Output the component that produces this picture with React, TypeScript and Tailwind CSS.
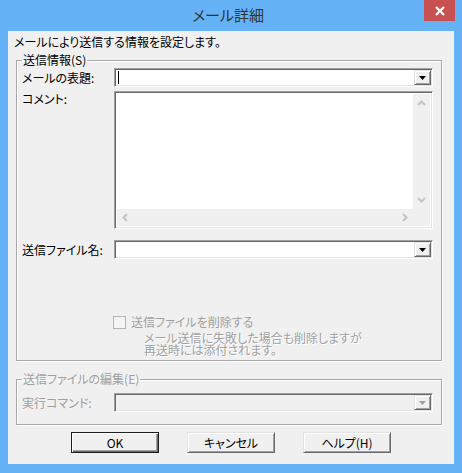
import React from "react";

const sunken =
  "border border-t-[#a0a0a0] border-l-[#a0a0a0] border-r-white border-b-white shadow-[inset_1px_1px_0_#696969,inset_-1px_-1px_0_#e3e3e3]";
const raised =
  "border border-t-[#e3e3e3] border-l-[#e3e3e3] border-r-[#696969] border-b-[#696969] shadow-[inset_1px_1px_0_#ffffff,inset_-1px_-1px_0_#a0a0a0] bg-[#f0f0f0]";

function DropButton({ disabled }: { disabled?: boolean }) {
  return (
    <div className={`flex h-full w-[17px] items-center justify-center ${raised}`}>
      <svg width="7" height="4" viewBox="0 0 7 4">
        <polygon points="0,0 7,0 3.5,4" fill={disabled ? "#a0a0a0" : "#000000"} />
      </svg>
    </div>
  );
}

function Combo({ disabled, caret }: { disabled?: boolean; caret?: boolean }) {
  return (
    <div
      className={`flex h-[19px] w-[319px] p-px ${sunken} ${disabled ? "bg-[#f0f0f0]" : "bg-white"}`}
    >
      <div className="flex flex-1 items-center pl-[2px]">
        {caret && <div className="h-[13px] w-px bg-black" />}
      </div>
      <DropButton disabled={disabled} />
    </div>
  );
}

function Chevron({ dir }: { dir: "up" | "down" | "left" | "right" }) {
  const pts = {
    up: "1,5 4.5,1.5 8,5",
    down: "1,1 4.5,4.5 8,1",
    left: "5,1 1.5,4.5 5,8",
    right: "1,1 4.5,4.5 1,8",
  }[dir];
  const vertical = dir === "up" || dir === "down";
  return (
    <svg
      width={vertical ? 9 : 6}
      height={vertical ? 6 : 9}
      viewBox={vertical ? "0 0 9 6" : "0 0 6 9"}
    >
      <polyline points={pts} fill="none" stroke="#c4c4c4" strokeWidth="2" />
    </svg>
  );
}

function Memo() {
  return (
    <div
      className={`grid h-[138px] w-[319px] grid-cols-[1fr_17px] grid-rows-[1fr_17px] bg-white p-[2px] ${sunken}`}
    >
      <div className="bg-white" />
      <div className="flex flex-col items-center justify-between bg-[#f0f0f0] py-[6px]">
        <Chevron dir="up" />
        <Chevron dir="down" />
      </div>
      <div className="flex items-center justify-between bg-[#f0f0f0] px-[5px]">
        <Chevron dir="left" />
        <Chevron dir="right" />
      </div>
      <div className="bg-[#f0f0f0]" />
    </div>
  );
}

function Button({ label, primary }: { label: string; primary?: boolean }) {
  return (
    <div
      className={`flex h-[21px] w-[88px] items-center justify-center bg-[#f0f0f0] text-[12px] leading-[14px] text-black ${
        primary
          ? "border border-[#1e1e1e] shadow-[inset_1px_1px_0_#ffffff,inset_-1px_-1px_0_#696969,inset_-2px_-2px_0_#a0a0a0]"
          : raised
      }`}
    >
      {label}
    </div>
  );
}

export default function App() {
  return (
    <div className="flex h-[473px] w-[462px] flex-col bg-[#66b2f7] font-['Noto_Sans_CJK_JP',sans-serif] [font-feature-settings:'palt'] text-black">
      {/* Title bar */}
      <div className="flex h-[31px] shrink-0">
        <div className="flex flex-1 items-center justify-center pb-[1px] pl-[32px] text-[15px] leading-[20px] text-[#333333]">
          メール詳細
        </div>
        <div className="mr-[7px] flex h-[21px] w-[31px] items-center justify-center bg-[#c75050]">
          <svg width="10" height="10" viewBox="0 0 10 10">
            <path d="M1 1 L9 9 M9 1 L1 9" stroke="#ffffff" strokeWidth="2.2" />
          </svg>
        </div>
      </div>

      {/* Client */}
      <div className="ml-[8px] flex h-[433px] w-[446px] flex-col bg-[#f0f0f0] text-[12px] leading-[14px]">
        <div className="pl-[6px] pt-[4px]">メールにより送信する情報を設定します。</div>

        {/* 送信情報 */}
        <fieldset className="ml-[8px] mt-[4px] w-[426px] border border-[#a8a8a8] pb-[4px] pl-[5px] shadow-[1px_1px_0_#ffffff,inset_1px_1px_0_#ffffff]">
          <legend className="px-[1px]">送信情報(S)</legend>
          <div className="mt-[1px] flex items-center">
            <span className="w-[92px]">メールの表題:</span>
            <Combo caret />
          </div>
          <div className="mt-[4px] flex items-start">
            <span className="w-[92px] pt-[1px]">コメント:</span>
            <Memo />
          </div>
          <div className="mt-[11px] flex items-center">
            <span className="w-[92px]">送信ファイル名:</span>
            <Combo />
          </div>
          <div className="ml-[91px] mt-[56px] flex h-[14px] items-center gap-[5px] text-[#a0a0a0]">
            <div className="h-[13px] w-[13px] border border-[#b4b4b4] bg-[#f4f4f4]" />
            <span>送信ファイルを削除する</span>
          </div>
          <p className="ml-[122px] mt-[3px] whitespace-pre-line text-[12px] leading-[12px] text-[#a0a0a0] [text-shadow:1px_1px_0_#ffffff]">
            {"メール送信に失敗した場合も削除しますが\n再送時には添付されます。"}
          </p>
        </fieldset>

        {/* 送信ファイルの編集 */}
        <fieldset className="ml-[8px] mt-[11px] w-[426px] border border-[#a8a8a8] pb-[12px] pl-[5px] text-[#a0a0a0] shadow-[1px_1px_0_#ffffff,inset_1px_1px_0_#ffffff]">
          <legend className="px-[1px]">送信ファイルの編集(E)</legend>
          <div className="mt-[7px] flex items-center">
            <span className="w-[92px]">実行コマンド:</span>
            <Combo disabled />
          </div>
        </fieldset>

        {/* Buttons */}
        <div className="ml-[63px] mt-[7px] flex gap-[28px]">
          <Button label="OK" primary />
          <Button label="キャンセル" />
          <Button label="ヘルプ(H)" />
        </div>
      </div>
    </div>
  );
}
